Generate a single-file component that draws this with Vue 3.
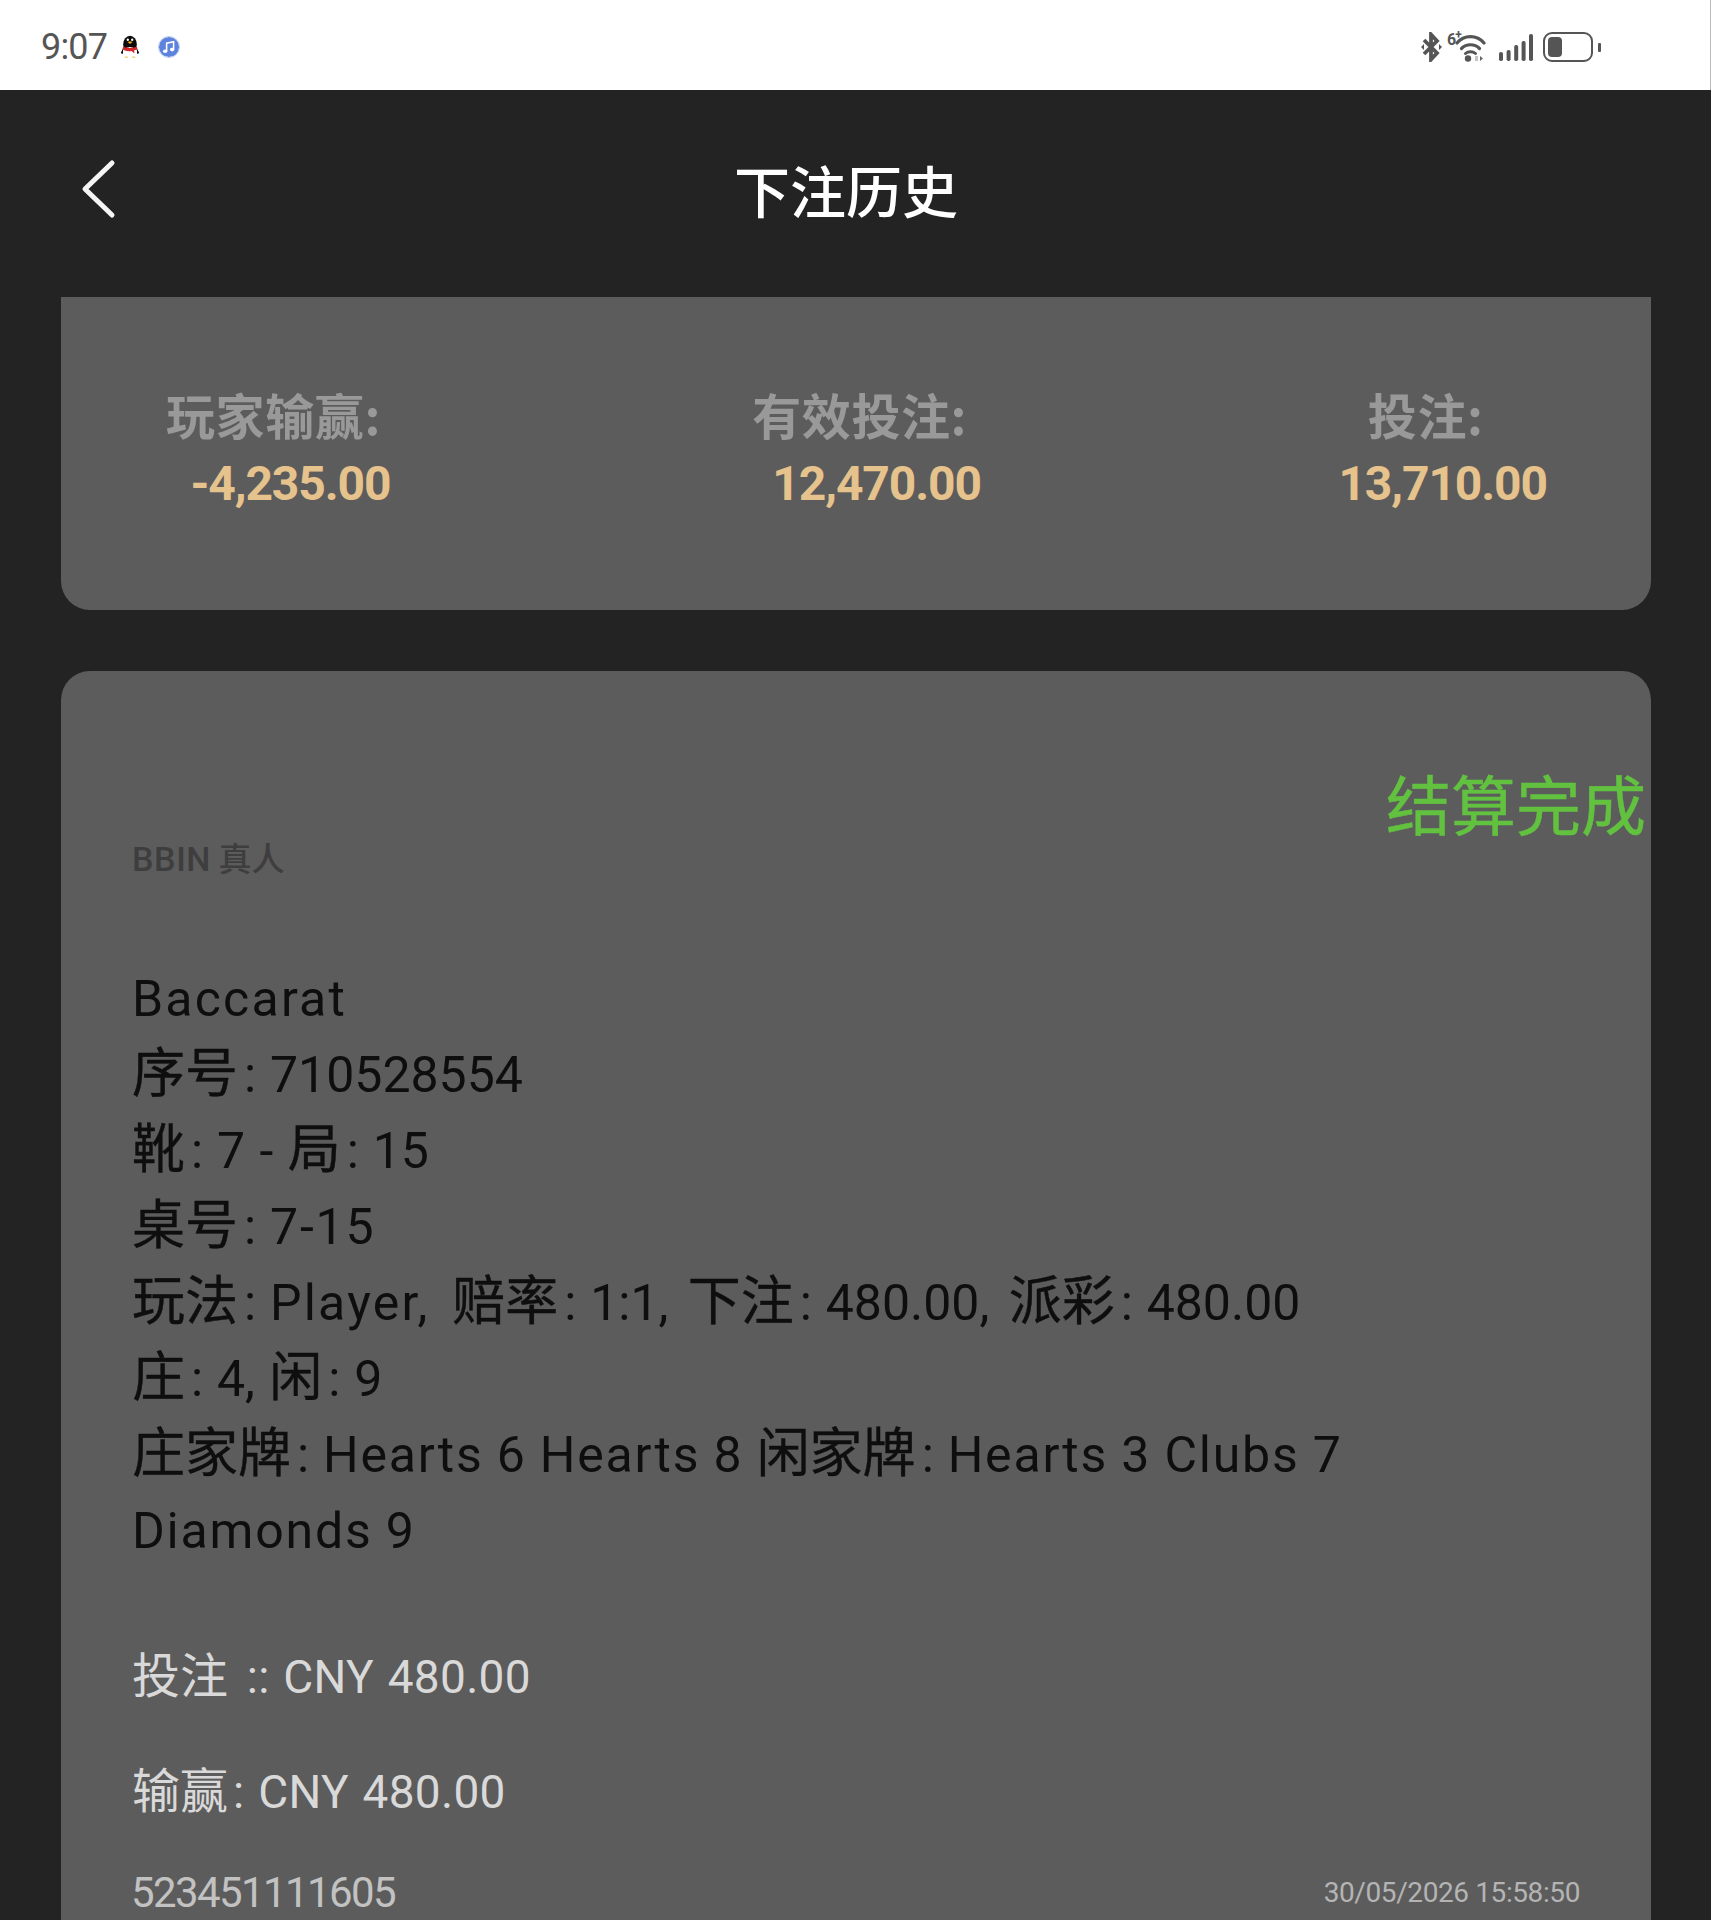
<script setup>
const lines = [
  [['l', 'Baccarat']],
  [['z', '序号'], ['c', ':'], ['n', '710528554']],
  [['z', '靴'], ['c', ':'], ['n', '7 - '], ['z', '局'], ['c', ':'], ['n', '15']],
  [['z', '桌号'], ['c', ':'], ['h', '7-15']],
  [['z', '玩法'], ['c', ':'], ['l', 'Player, '], ['z', '赔率'], ['c', ':'], ['p', '1:1, '], ['z', '下注'], ['c', ':'], ['p', '480.00, '], ['z', '派彩'], ['c', ':'], ['n', '480.00']],
  [['z', '庄'], ['c', ':'], ['n', '4, '], ['z', '闲'], ['c', ':'], ['n', '9']],
  [['z', '庄家牌'], ['c', ':'], ['h', 'Hearts 6 Hearts 8 '], ['z', '闲家牌'], ['c', ':'], ['h', 'Hearts 3 Clubs 7']],
  [['h', 'Diamonds 9']],
]
const stats = [
  { label: '玩家输赢:', value: '-4,235.00' },
  { label: '有效投注:', value: '12,470.00' },
  { label: '投注:', value: '13,710.00' },
]
const signal = [
  { x: 0, h: 9 }, { x: 7.600, h: 11 }, { x: 15.200, h: 16 }, { x: 22.600, h: 20 }, { x: 30, h: 27 },
]
</script>

<template>
  <div class="page">
    <div class="status">
      <div class="status-left">
        <span class="time">9:07</span>
        <svg class="qq" width="20" height="24" viewBox="0 0 22 26">
          <ellipse cx="11" cy="10" rx="7.500" ry="9.500" fill="#0b0b0b" />
          <ellipse cx="11" cy="19" rx="7" ry="6" fill="#fff" />
          <path d="M3.400 12.500c3 2 12 2 15.200 0l.4 3.200-3.400 1 .2 3.400-3-2.600c-2.400.4-5 .2-7.500-.6L2.800 15.600z" fill="#d5262b" />
          <path d="M3.500 14 .8 19.600l2.400 1zM18.500 14l2.700 5.600-2.400 1z" fill="#111" />
          <path d="M8.200 7.400 11 6.600l2.800.8L11 9.600z" fill="#f0a81e" />
          <circle cx="8.600" cy="5" r="1.300" fill="#fff" />
          <circle cx="13.400" cy="5" r="1.300" fill="#fff" />
          <path d="M4.500 24.600c1.600-1.400 3.400-1.400 5 0zM12.500 24.600c1.600-1.400 3.400-1.400 5 0z" fill="#eeb321" />
        </svg>
        <svg class="music" width="22" height="22" viewBox="0 0 24 24">
          <circle cx="12" cy="12" r="11" fill="#5d83dd" />
          <circle cx="12" cy="12" r="11.500" fill="none" stroke="#b9c8f0" stroke-width="1" />
          <path d="M9.400 16.400V7.800l7.600-1.600v8.400" fill="none" stroke="#fff" stroke-width="1.700" />
          <ellipse cx="7.800" cy="16.600" rx="2.400" ry="2" fill="#fff" />
          <ellipse cx="15.400" cy="14.800" rx="2.400" ry="2" fill="#fff" />
        </svg>
      </div>
      <div class="status-right">
        <svg width="21" height="30" viewBox="0 0 21 30">
          <path d="M3 8 16 21l-6 6.500V2.500L16 9 3 22" fill="none" stroke="#555" stroke-width="3.800" />
          <path d="M0 15l3-3v6zM21 15l-3-3v6z" fill="#555" />
        </svg>
        <div class="wifi">
          <span class="six">6<sup>+</sup></span>
          <svg class="wifi-arcs" width="31" height="29" viewBox="0 0 31 29">
            <path d="M2 10C9 1.500 22 1.500 29 10" fill="none" stroke="#555" stroke-width="3.200" stroke-linecap="round" />
            <path d="M6.500 15.500c5-5 13-5 18 0" fill="none" stroke="#555" stroke-width="3.200" stroke-linecap="round" />
            <path d="M10.500 20.500c2.800-2.500 7.200-2.500 10 0" fill="none" stroke="#555" stroke-width="3" stroke-linecap="round" />
            <circle cx="13" cy="25.500" r="3.200" fill="#555" />
            <path d="M20 23h3v5h-3z" fill="#c4c4c4" />
            <path d="M25 23l3 2.500-3 2.500z" fill="#666" />
          </svg>
        </div>
        <svg class="signal" width="34" height="27" viewBox="0 0 34 27">
          <rect v-for="b in signal" :key="b.x" :x="b.x" :y="27 - b.h" width="4" :height="b.h" rx="1.800" fill="#555" />
        </svg>
        <div class="battery">
          <div class="cell"><div class="fill"></div></div>
          <div class="nub"></div>
        </div>
      </div>
    </div>

    <div class="header">
      <svg class="back" width="36" height="60" viewBox="0 0 36 60">
        <path d="M31 4 4 30l27 26" fill="none" stroke="#f5f5f5" stroke-width="5" stroke-linecap="round" stroke-linejoin="round" />
      </svg>
      <h1 class="title">下注历史</h1>
    </div>

    <div class="content">
      <section class="summary">
        <div v-for="s in stats" :key="s.label" class="stat">
          <div class="stat-label">{{ s.label }}</div>
          <div class="stat-value">{{ s.value }}</div>
        </div>
      </section>

      <section class="card">
        <div class="state">结算完成</div>
        <div class="vendor"><span class="vendor-l">BBIN</span> 真人</div>
        <div class="detail">
          <div v-for="(line, i) in lines" :key="i" class="line">
            <span v-for="(seg, j) in line" :key="j" :class="seg[0]">{{ seg[1] }}</span>
          </div>
        </div>
        <div class="money">
          <div class="money-row"><span class="mz">投注</span><span class="ml"> :: CNY 480.00</span></div>
          <div class="money-row"><span class="mz">输赢</span><span class="ml">: CNY 480.00</span></div>
        </div>
        <div class="foot">
          <span class="ref">523451111605</span>
          <span class="stamp">30/05/2026 15:58:50</span>
        </div>
      </section>
    </div>
  </div>
</template>

<style scoped>
.page {
  width: 1711px;
  height: 1920px;
  overflow: hidden;
  background: #232323;
  font-family: "Noto Sans CJK SC", "Noto Sans", sans-serif;
}
.status {
  height: 90px;
  box-sizing: border-box;
  background: #fff;
  display: flex;
  align-items: center;
  justify-content: space-between;
  padding: 4px 109px 0 41px;
  border-right: 1px solid #bbb;
}
.status-left, .status-right { display: flex; align-items: center; }
.time {
  font: 36px/50px "Roboto", sans-serif;
  letter-spacing: -0.800px;
  color: #555;
  margin-right: 13px;
}
.music { margin-left: 18px; }
.wifi { display: flex; align-items: flex-start; margin-left: 5px; height: 29px; }
.six {
  font: 700 16px/14px "Roboto", sans-serif;
  letter-spacing: -1px;
  color: #555;
  width: 14px;
}
.six sup { font-size: 12px; line-height: 0; }
.wifi-arcs { margin-left: -6px; }
.signal { margin-left: 13px; }
.battery { display: flex; align-items: center; margin-left: 10px; }
.cell {
  width: 50px;
  height: 30px;
  box-sizing: border-box;
  border: 2.500px solid #555;
  border-radius: 9px;
  padding: 3px;
}
.fill { width: 14px; height: 100%; border-radius: 4px; background: #555; }
.nub { width: 3px; height: 9px; margin-left: 5px; background: #555; border-radius: 1px; }

.header {
  height: 207px;
  position: relative;
  display: flex;
  align-items: flex-start;
}
.back { position: absolute; left: 81px; top: 69px; }
.title {
  margin: 59px 0 0;
  width: 1692px;
  text-align: center;
  font-size: 56px;
  line-height: 80px;
  font-weight: 500;
  color: #fff;
}
.content {
  padding: 0 60px 0 61px;
  display: flex;
  flex-direction: column;
  gap: 61px;
}
.summary {
  height: 313px;
  box-sizing: border-box;
  background: #5c5c5c;
  border-radius: 0 0 29px 29px;
  display: flex;
  justify-content: space-between;
  padding: 80px 104px 0 105px;
}
.stat { text-align: center; }
.stat-label {
  padding-right: 34px;
  font-size: 49px;
  line-height: 74px;
  letter-spacing: 0.6px;
  font-weight: 700;
  color: #999;
  white-space: nowrap;
}
.stat-value {
  font: 700 48px/65px "Roboto", sans-serif;
  letter-spacing: -1.100px;
  color: #e6c28c;
  white-space: nowrap;
}
.card {
  background: #5c5c5c;
  border-radius: 29px 29px 0 0;
  height: 1300px;
  box-sizing: border-box;
  padding: 87px 5px 0 71px;
  color: #ececec;
}
.state {
  text-align: right;
  font-size: 65px;
  line-height: 88px;
  color: #62c240;
  font-weight: 400;
  -webkit-text-stroke: 0.5px #62c240;
}
.vendor {
  font-size: 33px;
  line-height: 44px;
  font-weight: 500;
  color: #3e3e3e;
  margin-top: -11px;
}
.vendor-l { font-family: "Roboto", sans-serif; font-size: 34px; letter-spacing: 0.6px; }
.detail { margin-top: 80px; font-family: "Roboto", sans-serif; font-size: 50px; }
.line {
  height: 76px;
  line-height: 76px;
  white-space: nowrap;
  color: #0e0e0e;
}
.z {
  font-family: "Noto Sans CJK SC", sans-serif;
  font-size: 53px;
  font-weight: 400;
  line-height: 0;
  -webkit-text-stroke: 0.4px #0e0e0e;
}
.c { display: inline-block; width: 32px; padding-left: 6px; box-sizing: border-box; font-size: 50px; }
.l, .n, .h, .p { white-space: pre; }
.l { letter-spacing: 2.200px; word-spacing: 8px; }
.n { letter-spacing: 0; word-spacing: 2px; }
.p { letter-spacing: 0; word-spacing: 7px; }
.h { letter-spacing: 1.800px; word-spacing: -1px; }
.money { margin-top: 70px; color: #d9d9d9; font-family: "Roboto", sans-serif; font-size: 46px; }
.money-row { height: 115px; line-height: 76px; white-space: nowrap; }
.mz { font-family: "Noto Sans CJK SC", sans-serif; font-size: 48px; line-height: 0; }
.ml { white-space: pre; word-spacing: 2px; letter-spacing: 0.300px; padding-left: 5px; }
.foot {
  display: flex;
  justify-content: space-between;
  align-items: center;
  margin-top: -1px;
  padding-right: 66px;
  color: #c2c2c2;
}
.ref {
  font: 42px/50px "Roboto", sans-serif;
  letter-spacing: -1.600px;
  margin-left: -1px;
}
.stamp {
  font: 28px/50px "Roboto", sans-serif;
  letter-spacing: -0.400px;
  color: #b4b4b4;
}
</style>
